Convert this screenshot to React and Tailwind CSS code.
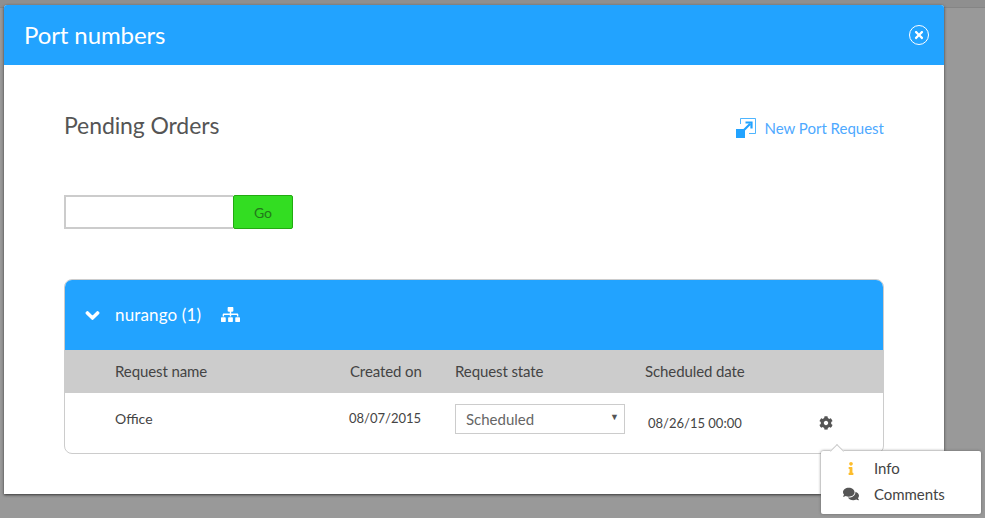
import { FaChevronDown, FaCog, FaComments, FaInfo, FaSitemap, FaTimes } from "react-icons/fa";

function PortIcon() {
  return (
    <svg width="20" height="20" viewBox="0 0 20 20" className="text-[#22a3ff]">
      <path d="M4.5 6V0.5H19.5V15.5H13" fill="none" stroke="currentColor" opacity="0.8" />
      <rect x="0" y="11" width="9" height="9" fill="currentColor" />
      <path d="M8 12L14 6M9.5 4.5H15.5V10.5" fill="none" stroke="currentColor" strokeWidth="2.2" />
    </svg>
  );
}

function App() {
  return (
    <div className="relative w-[985px] h-[518px] overflow-hidden bg-[#999999] pt-[5px] pl-[4px] font-['Lato',sans-serif] text-[#555555]">

      {/* Page behind the modal */}
      <div className="absolute inset-x-0 top-0 h-[8px] bg-[#8f8f8f] border-b border-[#858585]" />

      {/* Modal */}
      <div className="relative w-[940px] h-[489px] bg-white rounded-t-[3px] shadow-[0_1px_3px_#333333]">

        {/* Modal header */}
        <div className="h-[60px] bg-[#22a3ff] rounded-t-[3px] flex items-center justify-between pl-[20px] pr-[15px] text-white">
          <h1 className="text-[24px] tracking-[-0.1px] -mt-[1px]">Port numbers</h1>
          <button className="w-5 h-5 rounded-full border border-white flex items-center justify-center">
            <FaTimes className="text-[12px]" />
          </button>
        </div>

        {/* Modal body */}
        <div className="px-[60px]">

          <div className="flex items-center justify-between pt-[45px]">
            <h2 className="text-[23px] leading-[30px] tracking-[-0.1px]">Pending Orders</h2>
            <a className="flex items-center gap-[8px] text-[#4ea9ff] text-[15px] pt-[6px]">
              <PortIcon />
              New Port Request
            </a>
          </div>

          {/* Search */}
          <div className="flex mt-[55px]">
            <input className="w-[169px] h-[34px] border-2 border-[#cccccc] border-r-0 outline-none" />
            <button className="w-[60px] h-[34px] bg-[#33dd22] border border-[#22aa11] rounded-[2px] text-[14px] text-[#22771a]">
              Go
            </button>
          </div>

          {/* Orders */}
          <div className="mt-[50px] h-[175px] border border-[#cccccc] rounded-[8px] overflow-hidden">

            <div className="h-[70px] bg-[#22a3ff] flex items-center text-white pl-[20px]">
              <FaChevronDown className="text-[15px] w-[15px]" stroke="currentColor" strokeWidth={40} />
              <span className="ml-[15px] text-[17px] tracking-[0.15px]">nurango (1)</span>
              <FaSitemap className="ml-[20px] -mt-[1px] text-[19px]" />
            </div>

            <div className="h-[43px] bg-[#cccccc] flex items-center text-[15px] tracking-[-0.1px] text-[#444444] pl-[50px]">
              <span className="w-[235px]">Request name</span>
              <span className="w-[105px]">Created on</span>
              <span className="w-[190px]">Request state</span>
              <span>Scheduled date</span>
            </div>

            <div className="flex items-center h-[60px] text-[14px] text-[#444444] pl-[50px]">
              <span className="w-[234px] -mt-[9px]">Office</span>
              <span className="w-[106px] -mt-[9px] text-[13px]">08/07/2015</span>
              <div className="w-[170px] h-[30px] border border-[#cccccc] flex items-center justify-between pl-[10px] pr-[5px] pt-[1px] -mt-[9px] text-[15px] text-[#666666]">
                Scheduled
                <span className="text-[9px] text-[#555555] -mt-[4px]">▼</span>
              </div>
              <span className="ml-[23px] w-[171px] mt-[1px] text-[13px]">08/26/15 00:00</span>
              <FaCog className="text-[14px] text-[#555555]" />
            </div>

          </div>
        </div>
      </div>

      {/* Actions menu */}
      <div className="absolute left-[821px] top-[451px] w-[160px] h-[63px] bg-white rounded-[2px] shadow-[0_0_3px_#666666] pt-[4px] text-[15px] tracking-[-0.05px] text-[#444444]">
        <div className="absolute -top-[5px] left-[11px] w-[10px] h-[10px] bg-white rotate-45 border-l border-t border-[#cccccc]" />
        <div className="flex items-center h-[26px] pl-[22px]">
          <FaInfo className="w-4 text-[13px] text-[#fdbd2c]" />
          <span className="ml-[15px]">Info</span>
        </div>
        <div className="flex items-center h-[26px] pl-[22px]">
          <FaComments className="w-4 text-[16px] text-[#555555]" />
          <span className="ml-[15px]">Comments</span>
        </div>
      </div>

    </div>
  );
}

export default App;
